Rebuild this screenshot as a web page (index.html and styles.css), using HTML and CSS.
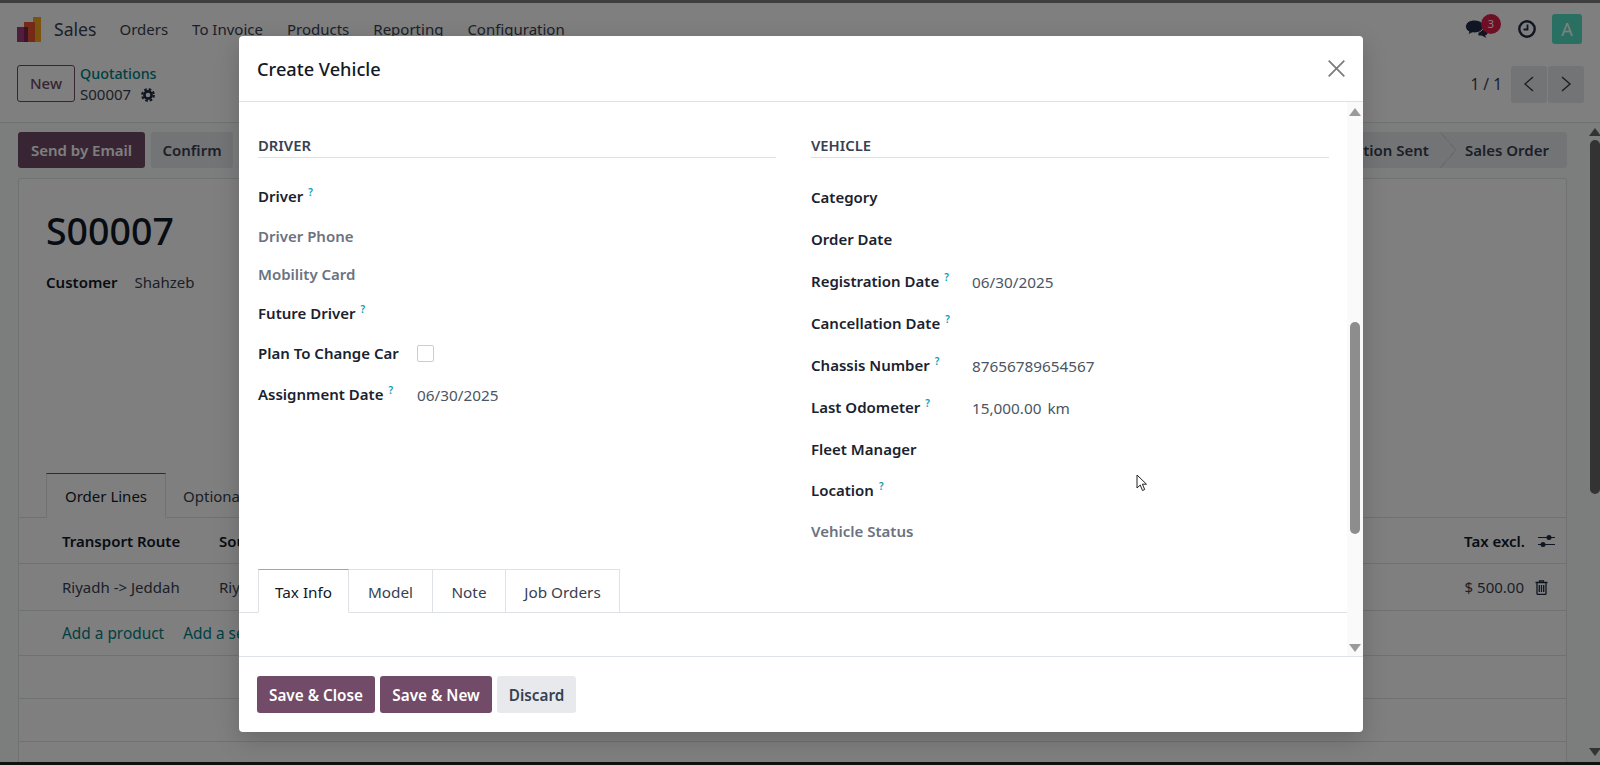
FILE: index.html
```html
<!DOCTYPE html>
<html lang="en">
<head>
<meta charset="utf-8">
<title>Create Vehicle</title>
<link rel="stylesheet" href="styles.css">
</head>
<body>
<div class="app">
  <div class="strip"></div>
  <nav class="nav">
    <svg class="logo" width="25" height="26" viewBox="0 0 25 26"><rect x="16" y="0" width="8" height="25" fill="#f5a623"/><rect x="7" y="5" width="11" height="20" fill="#e8542f"/><rect x="0" y="10" width="11" height="15" fill="#a03a7a"/><rect x="7" y="10" width="4" height="15" fill="#7a2450"/></svg>
    <span class="brand">Sales</span>
    <a class="menu">Orders</a><a class="menu">To Invoice</a><a class="menu">Products</a><a class="menu">Reporting</a><a class="menu">Configuration</a>
    <div class="systray">
      <div class="chat">
        <svg width="24" height="20" viewBox="0 0 24 20"><path fill="#1f2a44" d="M13 8h5c3 0 5 2 5 4.500 0 2-1 3.500-3 4l1.500 2.500-5-2.500h-3z"/><path fill="#1f2a44" stroke="#fff" d="M9.500 1C4.500 1 .5 3.700.5 7.500c0 2.300 1.400 4.200 3.500 5.300L2.800 16l4.600-2.300c.7.100 1.400.2 2.100.2 5 0 9-2.800 9-6.400S14.500 1 9.500 1z"/></svg>
        <span class="badge">3</span>
      </div>
      <svg class="clock" width="18" height="18" viewBox="0 0 18 18"><circle cx="9" cy="9" r="7.700" fill="none" stroke="#1f2a44" stroke-width="2.400"/><path d="M9.500 4.500v5H5.500" fill="none" stroke="#1f2a44" stroke-width="1.800"/></svg>
      <span class="avatar">A</span>
    </div>
  </nav>
  <header class="cp">
    <button class="btn-new">New</button>
    <div class="crumbs">
      <a class="crumb">Quotations</a>
      <span class="crumb-cur">S00007
        <svg class="gear" width="14" height="14" viewBox="0 0 14 14"><circle cx="7" cy="7" r="3.600" fill="none" stroke="#1f2a44" stroke-width="2.600"/><circle cx="7" cy="7" r="5.800" fill="none" stroke="#1f2a44" stroke-width="2.200" stroke-dasharray="2.600 1.950"/></svg>
      </span>
    </div>
    <div class="pager">
      <span class="pager-txt">1 / 1</span>
      <span class="pager-btns">
        <button class="pg"><svg width="12" height="16" viewBox="0 0 12 16"><path d="M10 1L2 8l8 7" fill="none" stroke="#374151" stroke-width="1.500"/></svg></button>
        <button class="pg"><svg width="12" height="16" viewBox="0 0 12 16"><path d="M2 1l8 7-8 7" fill="none" stroke="#374151" stroke-width="1.500"/></svg></button>
      </span>
    </div>
  </header>
  <div class="content">
    <main class="form">
      <div class="actions">
        <button class="btn-send">Send by Email</button>
        <button class="btn-confirm">Confirm</button>
        <div class="status">
          <span class="st">Quotation Sent</span>
          <span class="st-sep"></span>
          <span class="st st-last">Sales Order</span>
        </div>
      </div>
      <section class="sheet">
        <div class="sheet-head">
          <h1 class="ref">S00007</h1>
          <div class="cust"><b>Customer</b><span>Shahzeb</span></div>
        </div>
        <div class="so-tabs">
          <span class="so-tab active">Order Lines</span>
          <span class="so-tab">Optional Products</span>
        </div>
        <div class="tr th">
          <span class="c1">Transport Route</span><span class="c2">Source</span>
          <span class="c-end">Tax excl.</span>
          <svg class="c-ico" width="17" height="14" viewBox="0 0 17 14"><path d="M0 3.500h17M0 10.500h17" stroke="#1f2a44" stroke-width="1"/><circle cx="11" cy="3.500" r="2.500" fill="#1f2a44"/><circle cx="5" cy="10.500" r="2.500" fill="#1f2a44"/></svg>
        </div>
        <div class="tr td">
          <span class="c1">Riyadh -&gt; Jeddah</span><span class="c2">Riyadh</span>
          <span class="c-end">$ 500.00</span>
          <svg class="c-ico trash" width="13" height="15" viewBox="0 0 13 15"><path d="M4.500 2V.8h4V2M.5 2.500h12M2 2.500v11c0 .6.400 1 1 1h7c.6 0 1-.4 1-1v-11" fill="none" stroke="#1f2a44" stroke-width="1.300"/><path d="M4.300 5v7M6.500 5v7M8.700 5v7" stroke="#1f2a44" stroke-width="1.300"/></svg>
        </div>
        <div class="tr add"><a class="link">Add a product</a><a class="link">Add a section</a></div>
        <div class="tr blank"></div>
        <div class="tr blank"></div>
        <div class="tr blank"></div>
      </section>
    </main>
    <div class="pscroll">
      <span class="arr up dark"></span>
      <span class="pthumb"></span>
      <span class="arr down dark"></span>
    </div>
  </div>
  <div class="strip bottom"></div>

  <div class="backdrop"></div>
  <div class="modal">
    <div class="m-head">
      <h2 class="m-title">Create Vehicle</h2>
      <svg class="m-close" width="17" height="17" viewBox="0 0 17 17"><path d="M.7.700l15.600 15.600M16.300.700L.7 16.300" stroke="#7a7a7a" stroke-width="1.700"/></svg>
    </div>
    <div class="m-body">
      <div class="m-scroll">
        <div class="m-cols">
          <div class="col">
            <h3 class="sec">DRIVER</h3>
            <div class="rows rows-left">
              <div class="row"><label class="lb">Driver<sup class="q">?</sup></label></div>
              <div class="row"><label class="lb muted">Driver Phone</label></div>
              <div class="row"><label class="lb muted">Mobility Card</label></div>
              <div class="row"><label class="lb">Future Driver<sup class="q">?</sup></label></div>
              <div class="row"><label class="lb">Plan To Change Car</label><span class="check"></span></div>
              <div class="row"><label class="lb">Assignment Date<sup class="q">?</sup></label><span class="val">06/30/2025</span></div>
            </div>
          </div>
          <div class="col">
            <h3 class="sec">VEHICLE</h3>
            <div class="rows rows-right">
              <div class="row"><label class="lb">Category</label></div>
              <div class="row"><label class="lb">Order Date</label></div>
              <div class="row"><label class="lb">Registration Date<sup class="q">?</sup></label><span class="val">06/30/2025</span></div>
              <div class="row"><label class="lb">Cancellation Date<sup class="q">?</sup></label></div>
              <div class="row"><label class="lb">Chassis Number<sup class="q">?</sup></label><span class="val">87656789654567</span></div>
              <div class="row"><label class="lb">Last Odometer<sup class="q">?</sup></label><span class="val">15,000.00<span class="unit">km</span></span></div>
              <div class="row"><label class="lb">Fleet Manager</label></div>
              <div class="row"><label class="lb">Location<sup class="q">?</sup></label></div>
              <div class="row"><label class="lb muted">Vehicle Status</label></div>
            </div>
          </div>
        </div>
        <div class="m-tabs">
          <span class="m-tab active">Tax Info</span>
          <span class="m-tab">Model</span>
          <span class="m-tab">Note</span>
          <span class="m-tab">Job Orders</span>
        </div>
      </div>
      <div class="mscroll">
        <span class="arr up"></span>
        <span class="mthumb"></span>
        <span class="arr down"></span>
      </div>
    </div>
    <div class="m-foot">
      <button class="btn-p b1">Save &amp; Close</button>
      <button class="btn-p b2">Save &amp; New</button>
      <button class="btn-s">Discard</button>
    </div>
    <svg class="cursor" width="12" height="18" viewBox="0 0 12 18"><path d="M1 1v13l3.200-3 2.300 5.500 2.200-1-2.300-5.300H10.500z" fill="#fff" stroke="#222" stroke-width="1"/></svg>
  </div>
</div>
</body>
</html>
```
FILE: styles.css
```css
* { box-sizing: border-box; }
html, body { margin: 0; padding: 0; height: 100%; overflow: hidden; }
body { font-family: "Noto Sans", "Open Sans", sans-serif; font-size: 15px; color: #374151; background: #fff; }
h1, h2, h3 { margin: 0; }
button { font: inherit; border: 0; cursor: default; }
.app { position: relative; width: 1600px; height: 765px; display: flex; flex-direction: column; overflow: hidden; background: #f9fafb; }
.strip { height: 3px; background: #7c7c7c; flex: none; }
.strip.bottom { background: #222; }

.nav { flex: none; height: 43px; background: #fff; display: flex; align-items: center; padding: 8px 18px 0 17px; font-size: 15px; }
.logo { margin-right: 12px; flex: none; margin-top: 2px; }
.brand { font-size: 17.600px; margin-right: 23px; color: #374151; }
.menu { margin-right: 24px; color: #374151; }
.systray { margin-left: auto; display: flex; align-items: center; }
.chat { position: relative; width: 38px; height: 24px; margin-right: 15px; display: flex; align-items: center; }
.badge { position: absolute; left: 16px; top: -3px; width: 20px; height: 20px; border-radius: 50%; background: #dc1e4c; color: #fff; font-size: 11px; display: flex; align-items: center; justify-content: center; }
.clock { margin-right: 16px; }
.avatar { width: 30px; height: 30px; border-radius: 3px; background: #55e0c4; color: #fff; font-size: 18px; display: flex; align-items: center; justify-content: center; }

.cp { flex: none; height: 77px; background: #fff; border-bottom: 1px solid #dee2e6; display: flex; align-items: center; padding: 0 16px 0 17px; }
.btn-new { width: 58px; height: 37px; background: #fff; border: 1px solid #714b67; border-radius: 3px; color: #714b67; font-weight: 500; margin-bottom: 2px; }
.crumbs { display: flex; flex-direction: column; margin-left: 5px; line-height: 21px; }
.crumb { color: #017e84; font-weight: 500; font-size: 14.300px; }
.crumb-cur { display: flex; align-items: center; gap: 10px; color: #374151; }
.gear { flex: none; }
.pager { margin-left: auto; display: flex; align-items: center; gap: 9px; }
.pager-txt { font-size: 15.500px; }
.pager-btns { display: flex; gap: 1px; }
.pg { width: 36px; height: 37px; background: #e7e9ed; display: flex; align-items: center; justify-content: center; border-radius: 3px; padding: 0; }

.content { flex: 1; min-height: 0; display: flex; }
.form { flex: 1; min-width: 0; padding: 9px 18px 0 18px; overflow: hidden; }
.pscroll { flex: none; width: 15px; background: #f9fafb; display: flex; flex-direction: column; align-items: center; padding: 5px 0 0 4px; }
.pthumb { width: 10px; height: 354px; border-radius: 5px; background: #666; margin: 4px 0 254px; }

.arr { display: block; width: 0; height: 0; flex: none; border-left: 6px solid transparent; border-right: 6px solid transparent; }
.arr.up { border-bottom: 8px solid #9a9a9a; }
.arr.down { border-top: 8px solid #9a9a9a; }
.arr.dark.up { border-bottom-color: #666; }
.arr.dark.down { border-top-color: #666; }

.actions { display: flex; align-items: center; height: 36px; gap: 6px; font-weight: 600; }
.btn-send { width: 127px; height: 36px; background: #714b67; color: #fff; border-radius: 3px; font-weight: 600; }
.btn-confirm { width: 82px; height: 36px; background: #e7e9ed; color: #374151; border-radius: 3px; font-weight: 600; }
.status { margin-left: auto; display: flex; align-items: center; height: 36px; background: #e7e9ed; border-radius: 3px; color: #374151; }
.st { padding: 0 11px 0 22px; }
.st-last { padding: 0 18px 0 9px; }
.st-sep { width: 16px; height: 36px; background: linear-gradient(to top right, transparent 48%, #d0d3d9 48%, #d0d3d9 52%, transparent 52%) top / 100% 50% no-repeat, linear-gradient(to bottom right, transparent 48%, #d0d3d9 48%, #d0d3d9 52%, transparent 52%) bottom / 100% 50% no-repeat; }

.sheet { margin-top: 10px; background: #fff; border: 1px solid #dee2e6; border-radius: 3px 3px 0 0; height: 620px; }
.sheet-head { height: 294px; padding: 26px 27px 0; }
.ref { font-size: 37.500px; font-weight: 500; line-height: 52px; color: #111827; }
.cust { display: flex; gap: 17px; margin-top: 13px; line-height: 24px; }
.cust b { font-weight: 600; color: #111827; }
.so-tabs { height: 45px; display: flex; padding-left: 27px; border-bottom: 1px solid #dee2e6; }
.so-tab { height: 45px; padding: 0 18px; display: flex; align-items: center; border: 1px solid transparent; white-space: nowrap; }
.so-tab + .so-tab { padding-left: 16px; }
.so-tab.active { background: #fff; border-color: #dee2e6; border-top: 1px solid #714b67; border-bottom-color: #fff; color: #111827; }
.tr { display: flex; align-items: center; border-bottom: 1px solid #dee2e6; padding: 0 11px 0 43px; }
.th { height: 46px; font-weight: 600; color: #111827; }
.td { height: 47px; }
.add { height: 45px; gap: 19px; font-size: 15.400px; }
.blank { height: 43px; }
.c1 { width: 157px; flex: none; white-space: nowrap; }
.c2 { flex: none; }
.c-end { margin-left: auto; }
.c-ico { margin-left: 13px; }
.trash { margin-left: 11px; margin-right: 7px; }
.link { color: #017e84; }

.backdrop { position: absolute; inset: 0; background: rgba(0, 0, 0, .5); }
.modal { position: absolute; left: 239px; top: 36px; width: 1124px; height: 696px; background: #fff; border-radius: 4px; display: flex; flex-direction: column; box-shadow: 0 8px 24px rgba(0, 0, 0, .18); }
.m-head { flex: none; height: 66px; border-bottom: 1px solid #dee2e6; display: flex; align-items: center; justify-content: space-between; padding: 0 18px 0 18px; }
.m-title { font-size: 18.200px; font-weight: 500; color: #111827; }
.m-body { flex: 1; min-height: 0; display: flex; }
.m-scroll { flex: 1; min-width: 0; overflow: hidden; }
.mscroll { flex: none; width: 16px; background: #fafafa; display: flex; flex-direction: column; align-items: center; padding-top: 6px; }
.mthumb { width: 10px; height: 212px; border-radius: 5px; background: #8d8d8d; margin: 206px 0 110px; }
.m-cols { display: grid; grid-template-columns: 518px 518px; column-gap: 35px; padding: 32px 0 0 19px; height: 466px; }
.sec { font-size: 14.800px; font-weight: 600; color: #374151; line-height: 22px; border-bottom: 1px solid #dee2e6; height: 24px; }
.rows { display: grid; }
.rows-left { grid-template-rows: 41px 39px 38px 40px 39px 43px; padding-top: 17px; }
.rows-right { grid-template-rows: 41px 43px 42px 41px 44px 40px 43px 39px 43px; padding-top: 18px; }
.row { display: flex; align-items: center; }
.lb { width: 161px; flex: none; font-weight: 600; font-size: 15px; color: #1a2230; white-space: nowrap; }
.rows-left .lb { width: 159px; }
.lb.muted { color: #6b7280; }
.q { color: #0d9bb5; font-size: 10px; font-weight: 600; margin-left: 5px; line-height: 0; vertical-align: super; }
.val { color: #4b5563; font-size: 15.300px; padding-top: 2px; }
.unit { margin-left: 6px; }
.check { display: block; width: 17px; height: 17px; border: 1px solid #ccc; border-radius: 2px; background: #fff; margin-top: 1px; }
.m-tabs { display: grid; grid-template-columns: 91px 84px 73px 114px; height: 44px; padding-left: 19px; border-bottom: 1px solid #dee2e6; margin-top: 1px; font-size: 15.300px; }
.m-tab { height: 44px; display: flex; align-items: center; justify-content: center; border: 1px solid #dee2e6; border-left: 0; background: #fff; color: #374151; padding-top: 1px; }
.m-tab:first-child { border-left: 1px solid #dee2e6; }
.m-tab.active { border-top: 1px solid #b09bab; color: #111827; border-bottom-color: #fff; }
.m-foot { flex: none; height: 76px; border-top: 1px solid #dee2e6; display: flex; align-items: flex-start; padding: 19px 18px 0; gap: 5px; font-size: 15.300px; }
.btn-p { height: 37px; background: #714b67; color: #fff; border-radius: 3px; font-weight: 600; }
.b1 { width: 118px; }
.b2 { width: 112px; }
.btn-s { width: 79px; height: 37px; background: #e7e9ed; color: #374151; border-radius: 3px; font-weight: 600; }
.cursor { position: absolute; left: 897px; top: 438px; }
```
